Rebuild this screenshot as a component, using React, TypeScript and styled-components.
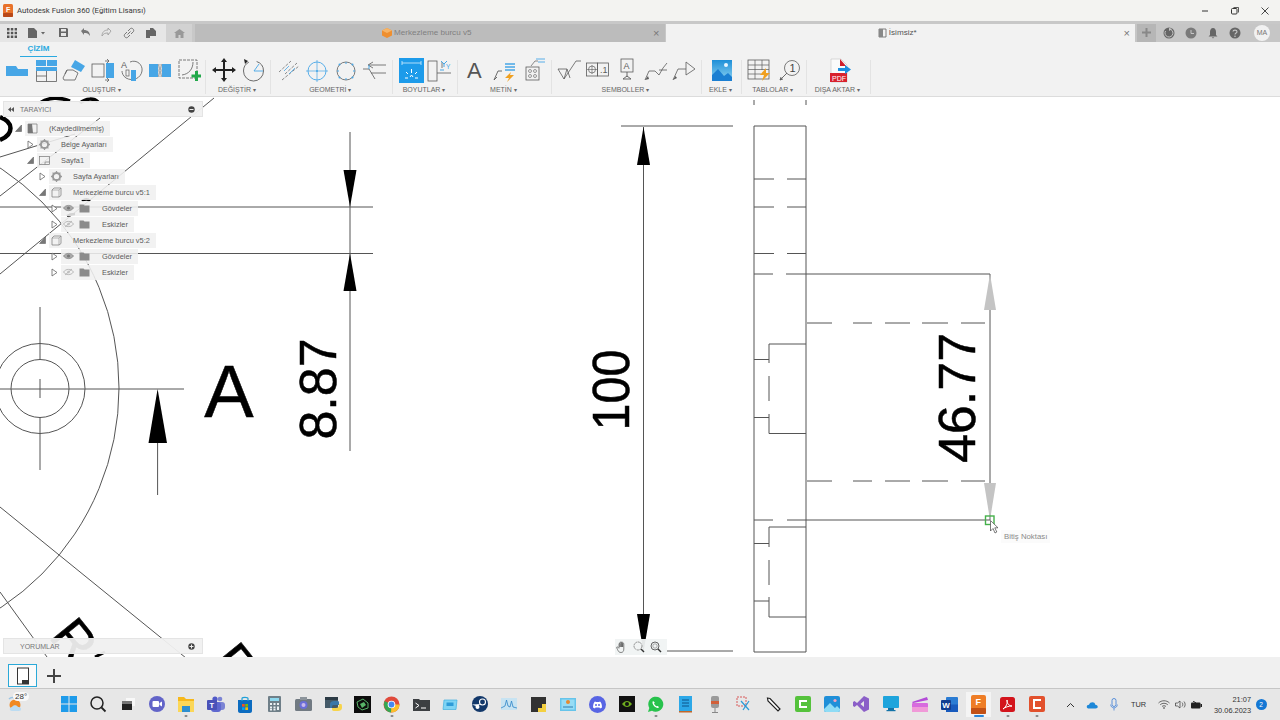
import React from "react";
import styled, { createGlobalStyle } from "styled-components";

const Global = createGlobalStyle`
  html, body { margin: 0; padding: 0; background: #fff; }
  body { font-family: "Liberation Sans", Arial, sans-serif; overflow: hidden; }
  * { box-sizing: border-box; }
`;

const Page = styled.div`
  width: 1280px; height: 720px; display: flex; flex-direction: column; overflow: hidden; background: #fff;
`;

/* ---------- title bar ---------- */
const TitleBar = styled.div`
  height: 21px; flex: none; display: flex; align-items: center; background: #f3f3f1; padding-left: 2px;
`;
const TitleText = styled.span`
  font-family: Roboto, "Liberation Sans", sans-serif; font-size: 7.8px; color: #3a3a3a; margin-left: 3px;
`;
const WindowButtons = styled.div`
  margin-left: auto; display: flex; align-items: center;
`;
const WindowButton = styled.div`
  width: 30px; height: 21px; display: flex; align-items: center; justify-content: center;
`;

/* ---------- tab bar ---------- */
const TabBar = styled.div`
  height: 21px; flex: none; display: flex; background: #c8c8c8; padding-top: 2.5px;
`;
const QuickAccess = styled.div`
  width: 166px; flex: none; display: flex; align-items: center; background: #e6e6e6; padding-left: 6px; gap: 10px;
`;
const HomeTab = styled.div`
  width: 26px; flex: none; margin-right: 3px; background: #d2d2d2; display: flex; align-items: center; justify-content: center;
`;
const Tab = styled.div<{ $active?: boolean }>`
  flex: 1; display: flex; align-items: center; justify-content: center; gap: 2px; position: relative; padding-right: 6px;
  font-size: 8.1px; color: ${p => (p.$active ? "#555" : "#808080")};
  background: ${p => (p.$active ? "#f2f2f2" : "#bcbcbc")};
  margin-right: ${p => (p.$active ? "0" : "1px")};
`;
const TabClose = styled.span`
  position: absolute; right: 5px; top: 3px; font-size: 11px; line-height: 13px; color: #777;
`;
const TabTools = styled.div`
  width: 145px; flex: none; display: flex; align-items: center; background: #c6c6c6; padding-left: 2px;
`;
const PlusBox = styled.div`
  width: 19px; height: 18px; background: #b6b6b6; display: flex; align-items: center; justify-content: center; margin-right: 2px;
`;
const ToolSlot = styled.div`
  width: 22px; display: flex; justify-content: center;
`;
const Avatar = styled.div`
  width: 16px; height: 16px; border-radius: 50%; background: #f1f1f1; color: #777; font-size: 7px;
  display: flex; align-items: center; justify-content: center; margin-left: 8px;
`;

/* ---------- ribbon ---------- */
const Ribbon = styled.div`
  height: 55px; flex: none; background: #f2f2f2; border-bottom: 1px solid #dcdcdc; display: flex; flex-direction: column;
`;
const RibbonTabs = styled.div`
  height: 15px; flex: none; padding-left: 20px;
`;
const RibbonTab = styled.div`
  width: 37px; height: 15px; text-align: center; color: #2aa9e0; font-size: 8px; font-weight: bold; line-height: 14px;
  border-bottom: 1.5px solid #2aa9e0;
`;
const Groups = styled.div`
  display: flex; flex: 1;
`;
const Group = styled.div<{ $w: number }>`
  width: ${p => p.$w}px; flex: none; display: flex; flex-direction: column; align-items: center;
  position: relative;
  &::after { content: ""; position: absolute; right: 0; top: 3px; bottom: 2px; width: 1px; background: #e3e3e3; }
`;
const IconRow = styled.div<{ $gap?: number }>`
  height: 25px; display: flex; align-items: flex-start; gap: ${p => p.$gap ?? 4.7}px; padding-top: 1px;
`;
const GroupLabel = styled.div`
  margin-top: 3px; padding-right: 3px; font-size: 7px; color: #666; line-height: 9px; white-space: nowrap;
  &::after { content: " ▾"; font-size: 6px; }
`;

/* ---------- canvas ---------- */
const Canvas = styled.div`
  flex: 1; position: relative; background: #fff; overflow: hidden;
`;
const Drawing = styled.svg`
  display: block; width: 1280px; height: 560px;
`;
const DimText = styled.text`
  font-family: "Liberation Sans", Arial, sans-serif; font-size: 53px; fill: #000; stroke: #000; stroke-width: 0.5px;
`;
const PanelBar = styled.div`
  width: 200px; height: 16px; background: rgba(240, 240, 240, 0.94); border: 1px solid #e4e4e4;
  display: flex; align-items: center; padding: 0 7px 0 4px; font-size: 7px; color: #777; position: relative;
`;
const BrowserPanel = styled.div`
  position: absolute; left: 3px; top: 4px; width: 200px;
`;
const CommentsPanel = styled.div`
  position: absolute; left: 3px; top: 541px;
`;
const PanelTitle = styled.span<{ $pad: number }>`
  padding-left: ${p => p.$pad}px; flex: 1;
`;
const Tree = styled.div`
  padding-top: 3px; display: flex; flex-direction: column;
`;
const TreeRow = styled.div<{ $level: number }>`
  height: 16px; display: flex; align-items: center; padding-left: ${p => p.$level * 12 + 12}px;
`;
const TreeToggle = styled.div`
  width: 10px; height: 16px; flex: none; display: flex; align-items: center; justify-content: flex-start;
`;
const TreePill = styled.div`
  height: 15px; background: rgba(240, 240, 240, 0.88); display: flex; align-items: center; padding: 0 6px 0 2px;
  font-size: 7.4px; color: #5a5a5a; white-space: nowrap;
`;
const TreeLabel = styled.span<{ $ml: number }>`
  margin-left: ${p => p.$ml}px;
`;
const EyeGap = styled.span`
  width: 5px; flex: none;
`;
const NavTools = styled.div`
  position: absolute; left: 615px; top: 542px; width: 52px; height: 16px; background: rgba(240, 243, 243, 0.95);
  display: flex; align-items: center; gap: 5.5px; padding-left: 1px;
`;
const Tooltip = styled.div`
  position: absolute; left: 1001px; top: 433px; height: 13px; padding: 0 3px; background: #fbfbfb;
  font-size: 7.8px; line-height: 13px; color: #8a8a8a; white-space: nowrap;
`;

/* ---------- sheet bar ---------- */
const SheetBar = styled.div`
  height: 31px; flex: none; background: #f0f0f0; display: flex; align-items: flex-end; padding: 0 0 1px 8px;
`;
const SheetThumb = styled.div`
  width: 29px; height: 23px; border: 1.5px solid #2aa9d8; background: #fafafa; display: flex; align-items: center; justify-content: center;
`;
const AddSheet = styled.div`
  margin-left: 9px; height: 23px; display: flex; align-items: center;
`;

/* ---------- taskbar ---------- */
const Taskbar = styled.div`
  height: 32px; flex: none; background: #e7e7e7; border-top: 1px solid #c6c6c6; display: flex; align-items: center;
`;
const Weather = styled.div`
  width: 54.3px; flex: none; padding-left: 7px; position: relative; display: flex; align-items: center;
`;
const WeatherTemp = styled.span`
  position: absolute; left: 13px; top: -4px; background: #f8f8f8; border-radius: 7px; padding: 0 2px;
  font-size: 8px; line-height: 9px; color: #333;
`;
const TaskApps = styled.div`
  display: flex; align-items: center;
`;
const TaskApp = styled.div<{ $open?: boolean; $active?: boolean }>`
  width: 29.35px; height: 30px; display: flex; align-items: center; justify-content: center; position: relative;
  padding: 2px 2px 3px;
  background: ${p => (p.$active ? "#f4f4f4" : "transparent")};
  background-clip: content-box;
  &::after {
    content: ""; display: ${p => (p.$open || p.$active ? "block" : "none")}; position: absolute; bottom: 3px; left: 50%;
    transform: translateX(-50%); height: 2px; border-radius: 1px;
    width: ${p => (p.$active ? "10px" : "3px")}; background: ${p => (p.$active ? "#2a86d8" : "#8a8a8a")};
  }
`;
const Tray = styled.div`
  margin-left: auto; display: flex; align-items: center; padding-right: 13.5px; font-size: 7.4px; color: #333;
`;
const TraySlot = styled.div<{ $w: number }>`
  width: ${p => p.$w}px; display: flex; justify-content: center; flex: none;
`;
const Clock = styled.div`
  width: 45px; text-align: right; line-height: 11px; font-size: 7.4px; color: #333;
`;
const Badge = styled.div`
  width: 11px; height: 11px; border-radius: 50%; background: #1477d4; color: #fff; font-size: 6.5px;
  display: flex; align-items: center; justify-content: center; margin-left: 4.5px;
`;

/* ---------- icons ---------- */
const B = "#47a6e6";
const G = "#5c5c5c";
const IcSvg = styled.svg`
  display: block; flex: none;
`;
type SP = { children: React.ReactNode; w?: number; h?: number };
const Ic = ({ children, w = 24, h = 24 }: SP) => (
  <IcSvg width={w} height={h} viewBox={`0 0 ${w} ${h}`} fill="none">{children}</IcSvg>
);

const R1 = () => <Ic><path d="M1 8H11L13 11H23V18H1Z" fill={B} /></Ic>;
const R2 = () => <Ic><rect x="2" y="2" width="10" height="6" fill={B} /><rect x="13" y="2" width="10" height="6" fill={B} /><rect x="2" y="9" width="21" height="4" fill={B} /><path d="M2.5 13V23.5H22.5V13M2.5 18H12.5V23.5M12.5 18V13" stroke={G} strokeWidth=".8" /></Ic>;
const R3 = () => <Ic><path d="M9 9L13 2L23 8L19 14Z" fill={B} /><path d="M1 20L5 12L11 12L16 15L13 22H2ZM5 12L3 16" stroke={G} strokeWidth=".8" /></Ic>;
const R4 = () => <Ic><rect x="1" y="6" width="12" height="13" stroke={G} strokeWidth=".8" /><rect x="15" y="5" width="8" height="15" fill={B} /><path d="M14 3H18M18 3L16 1M18 3L16 5M14 22H18M18 22L16 20M18 22L16 24" stroke={G} strokeWidth=".8" /></Ic>;
const R5 = () => <Ic><text x="1" y="10" fontSize="9" fill={G} fontFamily="Liberation Sans">A</text><path d="M10 4C17 1 23 7 22 13C21 20 13 24 6 20C3 18 2 15 2 13" stroke={G} strokeWidth=".8" /><rect x="6" y="12" width="3" height="6" stroke={G} strokeWidth=".7" /><rect x="11" y="12" width="5" height="11" fill={B} /></Ic>;
const R6 = () => <Ic><rect x="1" y="6" width="9" height="13" fill={B} /><rect x="14" y="6" width="9" height="13" fill={B} /><path d="M11 6C10 7 12 10 11 12.5C12 15 10 18 11 19M13 6C14 7 12 10 13 12.5C12 15 14 18 13 19" stroke={G} strokeWidth=".7" /></Ic>;
const R7 = () => <Ic><rect x="2" y="2" width="18" height="18" stroke={G} strokeWidth=".8" strokeDasharray="3 1" /><path d="M5 17C12 16 16 11 16 4" stroke={G} strokeWidth=".8" /><path d="M18 13H21V16.5H24V19.5H21V23H18V19.5H14.5V16.5H18Z" fill="#22a84a" /></Ic>;
const M1 = () => <Ic><path d="M11 2H13V11H22V13H13V22H11V13H2V11H11Z" fill="#222" /><path d="M12 0L15 4H9ZM12 24L15 20H9ZM0 12L4 9V15ZM24 12L20 9V15Z" fill="#222" /></Ic>;
const M2 = () => <Ic><circle cx="12.5" cy="13" r="10" stroke={G} strokeWidth=".9" strokeDasharray="42 8" /><path d="M13 13H22M13 13L18 6" stroke={B} strokeWidth=".9" /><path d="M3 1L7 3L4 6Z" fill="#222" /></Ic>;
const G1 = () => <Ic><path d="M2 14L14 3M8 16L20 5M5 22L22 8" stroke={G} strokeWidth=".7" strokeDasharray="3 1.5" /><path d="M7 13L12 8M12 16L18 10" stroke={B} strokeWidth=".8" /></Ic>;
const G2 = () => <Ic><circle cx="12" cy="13" r="9" stroke={B} strokeWidth=".9" /><path d="M12 2V24M1 13H23" stroke={B} strokeWidth=".7" /><circle cx="12" cy="13" r="1" fill={B} /></Ic>;
const G3 = () => <Ic><circle cx="12" cy="13" r="9" stroke={G} strokeWidth=".8" /><path d="M3 13H5M19 13H21M12 4V6M12 20V22" stroke={B} strokeWidth="1" /><circle cx="5.5" cy="6.5" r="1" fill={B} /><circle cx="18.5" cy="6.5" r="1" fill={B} /><circle cx="5.5" cy="19.5" r="1" fill={B} /><circle cx="18.5" cy="19.5" r="1" fill={B} /></Ic>;
const G4 = () => <Ic><path d="M6 7H23M8 15H23M10 4L5 7L10 10M0 11H6L12 21" stroke={G} strokeWidth=".8" /><path d="M6 11V7" stroke={B} /></Ic>;
const D1 = () => <Ic w={25} h={25}><rect width="25" height="25" fill="#1d9bea" /><path d="M3 5H22M3 3V7M22 3V7" stroke="#d6f0ff" strokeWidth=".8" /><path d="M12.5 11V15M7 14L9 16M18 14L16 16M6 20H9M16 20H19M11 19L12.5 17L14 19" stroke="#fff" strokeWidth="1" /></Ic>;
const D2 = () => <Ic><rect x="1" y="3" width="9" height="20" stroke={G} strokeWidth=".8" /><path d="M10 15H24M15 4V10" stroke={G} strokeWidth=".8" /><path d="M14 3L17 6L20 3M17 6V9" stroke={B} strokeWidth="1" /><path d="M13 12H17" stroke={B} /><text x="19" y="11" fontSize="6.5" fill={B} fontFamily="Liberation Sans">Y</text></Ic>;
const T1 = () => <Ic w={22} h={24}><text x="3" y="20" fontSize="22" fill="#555" fontFamily="Liberation Sans">A</text></Ic>;
const T2 = () => <Ic><path d="M2 22L6 13H10M2 22L5 19" stroke={G} strokeWidth=".9" /><path d="M13 6H23M13 9H23M13 12H23" stroke={B} strokeWidth="1.3" /><path d="M19 14L13 20H17L15 24L22 17H18Z" fill="#f0a020" /></Ic>;
const T3 = () => <Ic><rect x="5" y="9" width="13" height="13" stroke={G} strokeWidth=".8" /><circle cx="9" cy="13" r="1.5" stroke={G} strokeWidth=".6" /><circle cx="14" cy="13" r="1.5" stroke={G} strokeWidth=".6" /><circle cx="9" cy="18" r="1.5" stroke={G} strokeWidth=".6" /><circle cx="14" cy="18" r="1.5" stroke={G} strokeWidth=".6" /><path d="M10 8L14 3H17" stroke={G} strokeWidth=".7" /><path d="M15 1H24M17 4H24" stroke={B} strokeWidth=".9" /></Ic>;
const S1 = () => <Ic><path d="M1 11L7 21L10 11H1M10 11L13 20" stroke={G} strokeWidth=".8" /><path d="M7 21L19 3H24" stroke={G} strokeWidth=".8" /></Ic>;
const S2 = () => <Ic><rect x="0.5" y="5" width="11" height="13" stroke={G} strokeWidth=".8" /><rect x="11.5" y="5" width="11" height="13" stroke={G} strokeWidth=".8" /><circle cx="6" cy="11.5" r="3.5" stroke={G} strokeWidth=".7" /><path d="M1 11.5H11M6 7V16" stroke={G} strokeWidth=".6" /><text x="14" y="15" fontSize="9" fill={G} fontFamily="Liberation Sans">.1</text></Ic>;
const S3 = () => <Ic><rect x="6" y="1" width="12" height="13" stroke={G} strokeWidth=".8" /><text x="8.5" y="11" fontSize="9" fill={G} fontFamily="Liberation Sans">A</text><path d="M12 14V19M8 21H16L12 18Z" stroke={G} strokeWidth=".9" /></Ic>;
const S4 = () => <Ic><path d="M1 22L5 13H11L15 17L19 10L23 5M15 12L23 12" stroke={G} strokeWidth=".8" /><path d="M1 22L4 18L5 21Z" fill={G} /></Ic>;
const S5 = () => <Ic><path d="M1 22L6 11H14M14 4V17L23 11Z" stroke={G} strokeWidth=".8" /><path d="M1 22L3.5 18L5 20Z" fill={G} /></Ic>;
const E1 = () => <Ic><defs><linearGradient id="sky" x1="0" y1="0" x2="0" y2="1"><stop offset="0" stopColor="#1e8fd8" /><stop offset="1" stopColor="#8fd4f2" /></linearGradient></defs><rect x="2" y="2" width="20" height="21" fill="url(#sky)" /><circle cx="16" cy="7" r="2" fill="#eaf6ff" /><path d="M2 23V17L8 11L14 18L18 15L22 19V23Z" fill="#1b7fd2" /></Ic>;
const Tb1 = () => <Ic><rect x="1" y="2" width="21" height="19" stroke={G} strokeWidth=".8" /><path d="M1 7H22M1 11.5H22M1 16H14M8 2V21M15 2V12" stroke={G} strokeWidth=".7" /><path d="M19 10L13 17H17L15 23L23 15H19Z" fill="#f0a020" /></Ic>;
const Tb2 = () => <Ic><circle cx="14" cy="10" r="7.5" stroke={G} strokeWidth=".8" /><text x="11.5" y="14" fontSize="11" fill="#444" fontFamily="Liberation Sans">1</text><path d="M9 15L2 22M2 22L3 19M2 22L5 21" stroke={G} strokeWidth=".9" /></Ic>;
const Pdf = () => <Ic w={24} h={25}><path d="M4 1H14L20 7V24H4Z" fill="#fafafa" stroke="#bbb" strokeWidth=".5" /><path d="M13 1L19 8H13Z" fill="#cf1f2c" /><rect x="3" y="15" width="17" height="9" fill="#d8222e" /><text x="5" y="22.5" fontSize="7" fill="#fff" fontFamily="Liberation Sans">PDF</text><path d="M11 10H18V7L24 11.5L18 16V13H11Z" fill="#1c8fe0" /></Ic>;

const Logo = () => <Ic w={12} h={13}><rect x="1" y="0" width="10" height="13" rx="1.5" fill="#e8722a" /><rect x="1" y="9" width="10" height="4" rx="1" fill="#b84818" /><text x="4" y="7.5" fontSize="7" fontWeight="bold" fill="#fff" fontFamily="Liberation Sans">F</text></Ic>;

const Grid9 = () => <Ic w={12} h={12}><path d="M1 1H3.5V3.5H1ZM4.8 1H7.3V3.5H4.8ZM8.6 1H11V3.5H8.6ZM1 4.8H3.5V7.3H1ZM4.8 4.8H7.3V7.3H4.8ZM8.6 4.8H11V7.3H8.6ZM1 8.6H3.5V11H1ZM4.8 8.6H7.3V11H4.8ZM8.6 8.6H11V11H8.6Z" fill="#555" /></Ic>;
const FileIc = () => <Ic w={20} h={12}><path d="M0 1H6L9 4V11H0Z" fill="#666" /><path d="M13 5H17L15 7.5Z" fill="#666" /></Ic>;
const SaveIc = () => <Ic w={11} h={11}><path d="M1 1H9L10 2V10H1Z" fill="#666" /><rect x="3" y="2" width="5" height="2.5" fill="#e6e6e6" /><rect x="3" y="6" width="5" height="3" fill="#e6e6e6" /></Ic>;
const UndoIc = ({ c }: { c: string }) => <Ic w={12} h={11}><path d="M2 4L5 1V3C8.5 3 11 5 11 9C9.5 6.5 8 6 5 6V8Z" fill={c} /></Ic>;
const RedoIc = () => <Ic w={12} h={11}><path d="M10 4L7 1V3C3.5 3 1 5 1 9C2.5 6.5 4 6 7 6V8Z" stroke="#999" strokeWidth=".8" /></Ic>;
const LinkIc = () => <Ic w={12} h={12}><path d="M5 4L7.5 1.5C9 .5 11.5 2.5 10.5 4.5L8 7M7 8L4.5 10.5C3 11.5 .5 9.5 1.5 7.5L4 5" stroke="#777" strokeWidth="1" /><path d="M4.5 7.5L7.5 4.5" stroke="#777" /></Ic>;
const DocsIc = () => <Ic w={12} h={12}><path d="M1 3H5V11H1ZM5 1H8L11 4V9H5Z" fill="#666" /></Ic>;
const HomeIc = () => <Ic w={11} h={10}><path d="M5.5 1L11 5H9.5V10H6.5V7H4.5V10H1.5V5H0Z" fill="#999" /></Ic>;
const CubeIc = () => <Ic w={10} h={10}><path d="M5 0L10 2.5V7.5L5 10L0 7.5V2.5Z" fill="#ef8f2f" /><path d="M0 2.5L5 5L10 2.5L5 0Z" fill="#f7b466" /></Ic>;
const SheetTabIc = () => <Ic w={9} h={10}><path d="M1 1H8V9H1Z" stroke="#666" strokeWidth=".8" /><path d="M1 1H5V9H1Z" fill="#888" /></Ic>;
const PlusGrey = () => <Ic w={11} h={11}><path d="M4.5 1H6.5V4.5H10V6.5H6.5V10H4.5V6.5H1V4.5H4.5Z" fill="#888" /></Ic>;
const SyncIc = () => <Ic w={12} h={12}><circle cx="6" cy="6" r="5.5" fill="#666" /><path d="M6 2A4 4 0 1 1 2.5 4" stroke="#c6c6c6" strokeWidth="1" /><path d="M6 1V4L9 2Z" fill="#c6c6c6" /></Ic>;
const ClockIc = () => <Ic w={12} h={12}><circle cx="6" cy="6" r="5.5" fill="#7a7a7a" /><path d="M6 3V6.5H9" stroke="#c6c6c6" strokeWidth="1" /></Ic>;
const BellIc = () => <Ic w={12} h={12}><path d="M6 1C8 1 9 3 9 5V8L10.5 9.5H1.5L3 8V5C3 3 4 1 6 1ZM4.8 10.2H7.2L6 11.5Z" fill="#666" /></Ic>;
const HelpIc = () => <Ic w={12} h={12}><circle cx="6" cy="6" r="5.5" fill="#666" /><path d="M4 4.5C4.2 2.6 8 2.6 8 4.7C8 6 6 6 6 7.5" stroke="#c6c6c6" strokeWidth="1.1" /><circle cx="6" cy="9.2" r=".8" fill="#c6c6c6" /></Ic>;

const WinMin = () => <Ic w={10} h={10}><path d="M2 5H8" stroke="#333" strokeWidth="1" /></Ic>;
const WinMax = () => <Ic w={10} h={10}><rect x="1.5" y="2.5" width="5.5" height="5.5" rx="1" stroke="#333" strokeWidth="1" /><path d="M3.5 1.5H8.5V6.5" stroke="#333" strokeWidth=".8" /></Ic>;
const WinX = () => <Ic w={10} h={10}><path d="M1.5 1.5L8.5 8.5M8.5 1.5L1.5 8.5" stroke="#333" strokeWidth=".9" /></Ic>;

const DotMinus = () => <Ic w={7} h={7}><circle cx="3.5" cy="3.5" r="3.2" fill="#444" /><path d="M1.5 3.5H5.5" stroke="#eee" strokeWidth="1" /></Ic>;
const DotPlus = () => <Ic w={7} h={7}><circle cx="3.5" cy="3.5" r="3.2" fill="#444" /><path d="M1.5 3.5H5.5M3.5 1.5V5.5" stroke="#eee" strokeWidth="1" /></Ic>;
const Collapse = () => <Ic w={6} h={5}><path d="M3 0V5L0 2.5ZM6 0V5L3 2.5Z" fill="#555" /></Ic>;

const TriOpen = () => <Ic w={7} h={8}><path d="M6.5 1V7.5H0.5Z" fill="#777" stroke="#555" strokeWidth=".5" /></Ic>;
const TriClosed = () => <Ic w={7} h={9}><path d="M1 1L6 4.5L1 8Z" fill="#fff" stroke="#666" strokeWidth=".8" /></Ic>;
const DocIc = () => <Ic w={11} h={11}><path d="M1 1H10V10H1Z" stroke="#777" strokeWidth=".7" /><path d="M1 1H5L6 10H1Z" fill="#777" /></Ic>;
const GearIc = () => <Ic w={11} h={11}><circle cx="5.5" cy="5.5" r="3.6" stroke="#9a9a9a" strokeWidth="2" /><path d="M5.5 0V2M5.5 9V11M0 5.5H2M9 5.5H11M1.6 1.6L3 3M8 8L9.4 9.4M9.4 1.6L8 3M3 8L1.6 9.4" stroke="#9a9a9a" strokeWidth="1.3" /></Ic>;
const PageIc = () => <Ic w={11} h={9}><rect x=".5" y=".5" width="10" height="8" stroke="#777" strokeWidth=".7" /><path d="M6 8.5V6H10.5" stroke="#777" strokeWidth=".7" /></Ic>;
const BodyIc = () => <Ic w={11} h={11}><path d="M3 1H10V8.5L8 10H1V3Z" stroke="#777" strokeWidth=".7" /><path d="M1 3H8V10M8 3L10 1" stroke="#777" strokeWidth=".5" /></Ic>;
const EyeIc = ({ off }: { off?: boolean }) => <Ic w={11} h={8}><path d="M.5 4C3 .5 8 .5 10.5 4C8 7.5 3 7.5 .5 4Z" stroke={off ? "#aaa" : "#888"} strokeWidth=".8" fill={off ? "none" : "#aaa"} /><circle cx="5.5" cy="4" r="1.6" fill={off ? "#ccc" : "#777"} />{off && <path d="M2 7L9 1" stroke="#aaa" strokeWidth=".7" />}</Ic>;
const FolderIc = () => <Ic w={11} h={9}><path d="M.5 .5H4.5L5.5 1.5H10.5V8.5H.5Z" fill="#8b8b8b" /></Ic>;

const Hand = () => <Ic w={11} h={12}><path d="M3 7V3C3 2 4 2 4 3V6M4 6V1.8C4 .8 5.3 .8 5.3 1.8V6M5.3 6V1.5C5.3 .6 6.6 .6 6.6 1.5V6M6.6 6V2.8C6.6 2 7.8 2 7.8 2.8V8C7.8 10 7 11.5 5 11.5C3 11.5 2.5 10.5 1.5 8.5L.7 6.8C.3 6 1.3 5.5 1.8 6.2L3 7.5" stroke="#555" strokeWidth=".7" /></Ic>;
const Zoom1 = () => <Ic w={12} h={12}><circle cx="5" cy="5" r="4" stroke="#666" strokeWidth=".7" strokeDasharray="2 .6" /><path d="M8 8L11 11" stroke="#333" strokeWidth="1.4" /></Ic>;
const Zoom2 = () => <Ic w={12} h={12}><circle cx="5" cy="5" r="4" stroke="#555" strokeWidth=".9" /><circle cx="5" cy="5" r="2.2" stroke="#777" strokeWidth=".6" /><path d="M8 8L11 11" stroke="#333" strokeWidth="1.4" /></Ic>;

/* taskbar app icons */
const A = {
  start: <Ic w={18} h={18}><path d="M1 1H8.5V8.5H1ZM9.5 1H17V8.5H9.5ZM1 9.5H8.5V17H1ZM9.5 9.5H17V17H9.5Z" fill="#1e9bea" /></Ic>,
  search: <Ic w={18} h={18}><circle cx="8" cy="8" r="6" stroke="#222" strokeWidth="1.5" /><path d="M12.5 12.5L16.5 16.5" stroke="#222" strokeWidth="1.8" /></Ic>,
  task: <Ic w={14} h={14}><rect x="5" y="1" width="9" height="8" fill="#f8f8f8" /><rect x="1" y="4" width="10" height="9" fill="#222" /><rect x="1" y="4" width="10" height="3" fill="#777" /></Ic>,
  meet: <Ic w={18} h={18}><circle cx="9" cy="9" r="8" fill="#6264c8" /><rect x="4.5" y="6" width="6.5" height="6" rx="1" fill="#fff" /><path d="M11.5 8L14 6.5V11.5L11.5 10Z" fill="#fff" /></Ic>,
  files: <Ic w={18} h={17}><path d="M1 1H7L9 3H17V15H1Z" fill="#f6b81c" /><rect x="1" y="5" width="16" height="11" fill="#fbd758" /><rect x="5" y="10" width="8" height="6" fill="#2d8fd0" /></Ic>,
  teams: <Ic w={18} h={16}><circle cx="13" cy="3" r="2.3" fill="#7b83d4" /><circle cx="8" cy="3" r="2.6" fill="#5059c9" /><rect x="10" y="6" width="8" height="8" rx="3" fill="#7b83d4" /><rect x="4" y="6" width="10" height="10" rx="3" fill="#5f68cf" /><rect x="0" y="4" width="10" height="10" rx="1" fill="#4a52b8" /><text x="2.5" y="12" fontSize="7.5" fontWeight="bold" fill="#fff" fontFamily="Liberation Sans">T</text></Ic>,
  store: <Ic w={16} h={17}><path d="M1 4H15V15C15 16 14 17 13 17H3C2 17 1 16 1 15Z" fill="#0c6cc0" /><path d="M5 5V2.5C5 1 11 1 11 2.5V5" stroke="#1fa0d8" strokeWidth="1.2" /><path d="M5 8H7.7V10.7H5Z" fill="#f25022" /><path d="M8.3 8H11V10.7H8.3Z" fill="#7fba00" /><path d="M5 11.3H7.7V14H5Z" fill="#00a4ef" /><path d="M8.3 11.3H11V14H8.3Z" fill="#ffb900" /></Ic>,
  calc: <Ic w={13} h={16}><rect width="13" height="16" rx="1" fill="#6f7f88" /><rect x="2" y="2" width="9" height="3" fill="#8ed8ee" /><path d="M2 7H4V9H2ZM5.5 7H7.5V9H5.5ZM9 7H11V9H9ZM2 10.5H4V12.5H2ZM5.5 10.5H7.5V12.5H5.5ZM9 10.5H11V14H9ZM2 13H4V14.5H2ZM5.5 13H7.5V14.5H5.5Z" fill="#eef2f4" /></Ic>,
  camera: <Ic w={17} h={14}><rect y="2" width="17" height="12" rx="1.5" fill="#717a82" /><rect x="5" y="0" width="7" height="3" fill="#8c949b" /><circle cx="8.5" cy="8" r="4" fill="#6a6ed8" /><circle cx="8.5" cy="8" r="2" fill="#c7b8ec" /></Ic>,
  python: <Ic w={17} h={17}><rect y="1" width="13" height="11" fill="#445a68" /><rect y="1" width="13" height="3" fill="#2b3a44" /><path d="M9 5H13C14 5 14 6 14 7V9H9C7 9 7 10 7 12H5V8C5 6 7 5 9 5Z" fill="#3a77a8" /><path d="M14 8H16C17 8 17 10 17 12C17 14 15 15 13 15H9C7 15 7 14 7 12H11C13 12 14 11 14 8Z" fill="#f7d44b" /></Ic>,
  malware: <Ic w={17} h={17}><rect width="17" height="17" fill="#0c0c0c" /><path d="M3 6L9 3L14 7V12L8 14L4 11Z" stroke="#58b368" strokeWidth="1" /><path d="M6 8L10 6L12 9L8 12Z" fill="#58b368" /></Ic>,
  chrome: <Ic w={17} h={17}><circle cx="8.5" cy="8.5" r="8" fill="#e04a3c" /><path d="M8.5 8.5L1.5 5L1 8C1 13 4 16 8 16.5Z" fill="#35a853" /><path d="M8.5 8.5H16.5C16.5 13 13 16.5 8 16.5Z" fill="#fbc02d" /><circle cx="8.5" cy="8.5" r="3.8" fill="#fff" /><circle cx="8.5" cy="8.5" r="2.9" fill="#4688f1" /></Ic>,
  term: <Ic w={17} h={13}><path d="M0 1H6L7 2H17V13H0Z" fill="#3c3f42" /><path d="M2.5 5L6 7.5L2.5 10" stroke="#fff" strokeWidth="1" /><path d="M8 10H13" stroke="#fff" strokeWidth="1" /></Ic>,
  box: <Ic w={16} h={13}><path d="M2 2H15L14 11.5H1Z" fill="#7fd4f4" stroke="#3fb0e0" strokeWidth=".7" /><rect x="4.5" y="4.5" width="7" height="3.5" fill="#2d9bd8" /></Ic>,
  steam: <Ic w={16} h={16}><circle cx="8" cy="8" r="8" fill="#12386a" /><path d="M0 8.5L6 11L8 8" fill="#e8eef5" /><circle cx="10.5" cy="6" r="3" stroke="#fff" strokeWidth="1.1" /><circle cx="5.5" cy="11" r="2" fill="#fff" /></Ic>,
  chart: <Ic w={16} h={12}><rect width="16" height="12" fill="#c7e3f2" /><path d="M0 10L4 8L5.5 2L7 8L9 9L10.5 3L12 9L16 10" stroke="#2d85c8" strokeWidth=".8" /></Ic>,
  sticky: <Ic w={15} h={15}><rect width="15" height="15" fill="#323232" /><path d="M15 7V15H7L7 11H11V7Z" fill="#f4d03f" /></Ic>,
  ctrl: <Ic w={16} h={13}><rect width="16" height="13" fill="#66c4ea" /><rect x="1.5" y="1.5" width="13" height="10" fill="#96dcf5" /><circle cx="8" cy="4" r="2" fill="#e68a2e" /><path d="M3 9H13" stroke="#2d7db0" /></Ic>,
  discord: <Ic w={17} h={17}><circle cx="8.5" cy="8.5" r="8.5" fill="#5865e4" /><path d="M4 11.5C4 8 5 6 6 5.5L7 6H10L11 5.5C12 6 13 8 13 11.5L11 12.5L10.5 11.5H6.5L6 12.5Z" fill="#fff" /><circle cx="7" cy="9" r="1" fill="#5865e4" /><circle cx="10" cy="9" r="1" fill="#5865e4" /></Ic>,
  nvidia: <Ic w={16} h={16}><rect width="16" height="16" fill="#111" /><path d="M3 8C6 4 10 4 13 8C10 12 6 12 3 8Z" fill="#6fae1f" /><circle cx="8" cy="8" r="2" fill="#111" /></Ic>,
  wa: <Ic w={17} h={17}><path d="M1 16L2.3 12A7.5 7.5 0 1 1 5 14.7Z" fill="#27c24c" /><path d="M6 5C5 6 5.5 8 7 10C8.5 11.5 10.5 12.5 12 11.5L11 10L9.5 10.3C8.5 9.8 7.5 8.7 7 7.5L7.8 6.5Z" fill="#fff" /></Ic>,
  note: <Ic w={13} h={17}><rect width="13" height="15" fill="#2ca8e8" /><path d="M3 4H10M3 7H10M3 10H10" stroke="#0a4a80" strokeWidth=".9" /><rect y="15" width="13" height="1.5" fill="#c2672a" /></Ic>,
  mic: <Ic w={10} h={17}><rect x="1" y="0" width="8" height="12" rx="2" fill="#9a9a9a" /><rect x="1" y="5" width="8" height="3" fill="#d2603a" /><path d="M5 12V16M2 16.5H8" stroke="#888" /></Ic>,
  snip: <Ic w={16} h={16}><rect x="1" y="1" width="9" height="9" stroke="#d85a5a" strokeWidth="1" strokeDasharray="2 1" /><path d="M5 5L13 14M13 5L7 14" stroke="#2a9ad8" strokeWidth="1.2" /></Ic>,
  pen: <Ic w={15} h={15}><path d="M1.5 1L4 1.5L14 12L12 14L2 4Z" fill="#fff" stroke="#222" strokeWidth="1.2" /></Ic>,
  green: <Ic w={16} h={16}><rect width="16" height="16" rx="2" fill="#55c23c" /><path d="M12 5H5V11H12" stroke="#fff" strokeWidth="2" /></Ic>,
  photos: <Ic w={16} h={16}><rect width="16" height="16" rx="2" fill="#1f8fd8" /><path d="M0 13L6 7L11 12L13 10L16 13V14C16 15 15 16 14 16H2C1 16 0 15 0 14Z" fill="#8fdcf5" /><circle cx="11" cy="4.5" r="1.6" fill="#f5a0c0" /></Ic>,
  vs: <Ic w={16} h={16}><path d="M11 0L16 2.5V13.5L11 16L4 9L1.5 11L0 10V6L1.5 5L4 7ZM11 5L7.5 8L11 11Z" fill="#8b5fc8" /></Ic>,
  mon: <Ic w={16} h={16}><rect x="0" y="0" width="16" height="12" rx="1" fill="#1ea4dc" /><rect x="5" y="12" width="6" height="2" fill="#1273a8" /><rect x="3.5" y="14" width="9" height="1.2" fill="#1273a8" /></Ic>,
  clap: <Ic w={16} h={16}><path d="M0 6L15 1L16 4L1 7Z" fill="#b34bd8" /><rect y="7" width="16" height="9" rx="1" fill="#d86bde" /><rect y="11" width="16" height="5" fill="#f09ad8" /></Ic>,
  word: <Ic w={17} h={15}><rect x="5" width="12" height="15" rx="1" fill="#2b7cd3" /><rect x="5" y="7.5" width="12" height="7.5" fill="#185abd" /><rect y="3" width="10" height="10" rx="1" fill="#103f91" /><text x="1.3" y="11" fontSize="8" fontWeight="bold" fill="#fff" fontFamily="Liberation Sans">W</text></Ic>,
  fusion: <Ic w={15} h={19}><rect width="15" height="19" rx="2" fill="#ee7d26" /><rect y="13" width="15" height="6" rx="1" fill="#c25115" /><text x="4.5" y="10" fontSize="9" fontWeight="bold" fill="#fff" fontFamily="Liberation Sans">F</text></Ic>,
  acro: <Ic w={15} h={15}><rect width="15" height="15" rx="2.5" fill="#d3141c" /><path d="M3 12C6 10 8 6 7 3C6.5 6 9 9 12 9C9 9 5 10 3 12Z" stroke="#fff" strokeWidth="1" /></Ic>,
  cam: <Ic w={16} h={16}><rect width="16" height="16" rx="2" fill="#e2512d" /><path d="M12 4H5V12H12" stroke="#fff" strokeWidth="2" /></Ic>,
};

const apps: { k: keyof typeof A; open?: boolean; active?: boolean }[] = [
  { k: "start" }, { k: "search" }, { k: "task" }, { k: "meet" }, { k: "files", open: true }, { k: "teams" }, { k: "store" },
  { k: "calc" }, { k: "camera" }, { k: "python" }, { k: "malware" }, { k: "chrome", open: true }, { k: "term" }, { k: "box" },
  { k: "steam" }, { k: "chart" }, { k: "sticky" }, { k: "ctrl" }, { k: "discord" }, { k: "nvidia" }, { k: "wa", open: true },
  { k: "note" }, { k: "mic" }, { k: "snip" }, { k: "pen" }, { k: "green" }, { k: "photos" }, { k: "vs" }, { k: "mon" },
  { k: "clap" }, { k: "word" }, { k: "fusion", active: true }, { k: "acro", open: true }, { k: "cam", open: true },
];

const groups: { w: number; label: string; icons: React.FC[]; gap?: number }[] = [
  { w: 206, label: "OLUŞTUR", icons: [R1, R2, R3, R4, R5, R6, R7] },
  { w: 64.6, label: "DEĞİŞTİR", icons: [M1, M2] },
  { w: 122.1, label: "GEOMETRİ", icons: [G1, G2, G3, G4] },
  { w: 65.3, label: "BOYUTLAR", icons: [D1, D2], gap: 3 },
  { w: 93.7, label: "METİN", icons: [T1, T2, T3], gap: 5.5 },
  { w: 150.3, label: "SEMBOLLER", icons: [S1, S2, S3, S4, S5] },
  { w: 39.7, label: "EKLE", icons: [E1] },
  { w: 65, label: "TABLOLAR", icons: [Tb1, Tb2], gap: 7 },
  { w: 64, label: "DIŞA AKTAR", icons: [Pdf] },
];

const tree: { level: number; open: boolean; eye?: "on" | "off"; icon: React.ReactNode; label: string; ml: number }[] = [
  { level: 0, open: true, icon: <DocIc />, label: "(Kaydedilmemiş)", ml: 11 },
  { level: 1, open: false, icon: <GearIc />, label: "Belge Ayarları", ml: 11 },
  { level: 1, open: true, icon: <PageIc />, label: "Sayfa1", ml: 11 },
  { level: 2, open: false, icon: <GearIc />, label: "Sayfa Ayarları", ml: 11 },
  { level: 2, open: true, icon: <BodyIc />, label: "Merkezleme burcu v5:1", ml: 11 },
  { level: 3, open: false, eye: "on", icon: <FolderIc />, label: "Gövdeler", ml: 12 },
  { level: 3, open: false, eye: "off", icon: <FolderIc />, label: "Eskizler", ml: 12 },
  { level: 2, open: true, icon: <BodyIc />, label: "Merkezleme burcu v5:2", ml: 11 },
  { level: 3, open: false, eye: "on", icon: <FolderIc />, label: "Gövdeler", ml: 12 },
  { level: 3, open: false, eye: "off", icon: <FolderIc />, label: "Eskizler", ml: 12 },
];

const ink = "#555";
const segs: [number, number, number, number][] = [
  /* left view */
  [40, 307, 40, 360], [40, 379, 40, 398], [40, 417, 40, 470], [0, 389, 184, 389], [157.6, 443, 157.6, 495],
  [214, 98, 0, 274], [0, 157, 75, 134], [0, 196, 100, 118], [0, 507, 186, 658], [0, 592, 47, 657],
  /* 8.87 dimension */
  [350, 132, 350, 451], [0, 207, 373, 207], [0, 253.5, 373, 253.5],
  /* 100 dimension */
  [643.5, 127, 643.5, 650], [621, 126, 733, 126], [667, 651, 733, 651],
  /* part outline */
  [754, 126, 806, 126], [754, 126, 754, 652], [806, 126, 806, 652], [754, 652, 806, 652], [754, 100, 754, 105], [806, 100, 806, 105],
  [754, 179, 774, 179], [787, 179, 806, 179], [754, 207, 774, 207], [787, 207, 806, 207], [754, 253.5, 774, 253.5], [787, 253.5, 806, 253.5],
  [754, 274, 773, 274], [786, 274, 990, 274], [754, 520, 773, 520], [787, 520, 990, 520],
  /* upper counterbore */
  [769, 344, 806, 344], [769, 433.5, 806, 433.5], [769, 344, 769, 363], [769, 376, 769, 401], [769, 414, 769, 433.5], [754, 359.5, 769, 359.5], [754, 417.5, 769, 417.5],
  /* lower counterbore */
  [769, 527, 806, 527], [769, 617, 806, 617], [769, 527, 769, 547], [769, 560, 769, 585], [769, 597, 769, 617], [754, 543.5, 769, 543.5], [754, 601, 769, 601],
  /* 46.77 dashes */
  [807, 323, 832, 323], [853, 323, 872, 323], [885, 323, 910, 323], [922, 323, 948, 323], [961, 323, 985, 323],
  [807, 481, 832, 481], [853, 481, 872, 481], [885, 481, 910, 481], [922, 481, 948, 481], [961, 481, 985, 481],
  [990, 274, 990, 520],
];

export default function App() {
  return (
    <Page>
      <Global />
      <TitleBar>
        <Logo />
        <TitleText>Autodesk Fusion 360 (Eğitim Lisansı)</TitleText>
        <WindowButtons>
          <WindowButton><WinMin /></WindowButton>
          <WindowButton><WinMax /></WindowButton>
          <WindowButton><WinX /></WindowButton>
        </WindowButtons>
      </TitleBar>
      <TabBar>
        <QuickAccess>
          <Grid9 /><FileIc /><SaveIc /><UndoIc c="#777" /><RedoIc /><LinkIc /><DocsIc />
        </QuickAccess>
        <HomeTab><HomeIc /></HomeTab>
        <Tab><CubeIc />Merkezleme burcu v5<TabClose>×</TabClose></Tab>
        <Tab $active><SheetTabIc />İsimsiz*<TabClose>×</TabClose></Tab>
        <TabTools>
          <PlusBox><PlusGrey /></PlusBox>
          <ToolSlot><SyncIc /></ToolSlot>
          <ToolSlot><ClockIc /></ToolSlot>
          <ToolSlot><BellIc /></ToolSlot>
          <ToolSlot><HelpIc /></ToolSlot>
          <Avatar>MA</Avatar>
        </TabTools>
      </TabBar>
      <Ribbon>
        <RibbonTabs><RibbonTab>ÇİZİM</RibbonTab></RibbonTabs>
        <Groups>
          {groups.map(g => (
            <Group key={g.label} $w={g.w}>
              <IconRow $gap={g.gap}>{g.icons.map((I, i) => <I key={i} />)}</IconRow>
              <GroupLabel>{g.label}</GroupLabel>
            </Group>
          ))}
        </Groups>
      </Ribbon>
      <Canvas>
        <Drawing viewBox="0 97 1280 560">
          {segs.map(([a, b, c, d], i) => <line key={i} x1={a} y1={b} x2={c} y2={d} stroke={ink} strokeWidth="1" />)}
          <circle cx="-144" cy="388" r="263" fill="none" stroke={ink} strokeWidth="1" />
          <circle cx="40" cy="388.5" r="29" fill="none" stroke={ink} strokeWidth="1" />
          <circle cx="40" cy="388.5" r="45" fill="none" stroke={ink} strokeWidth="1" />
          {/* arrowheads */}
          <path d="M157.6 389L167 443H148.5Z" fill="#000" />
          <path d="M350 207L356.5 170H343.5Z" fill="#000" />
          <path d="M350 253.5L356.5 291H343.5Z" fill="#000" />
          <path d="M643.5 127L650 165H637Z" fill="#000" />
          <path d="M643.5 652L650 614H637Z" fill="#000" />
          <path d="M990 274L996 310H984Z" fill="#c4c4c4" />
          <path d="M990 520L996 483H984Z" fill="#c4c4c4" />
          {/* dimension text */}
          <DimText x="229" y="416.5" textAnchor="middle" style={{ fontSize: 74 }}>A</DimText>
          <DimText textAnchor="middle" transform="translate(335.5 389) rotate(-90)" style={{ fontSize: 52 }}>8.87</DimText>
          <DimText textAnchor="middle" transform="translate(628.5 390) rotate(-90)" textLength={81} lengthAdjust="spacingAndGlyphs" style={{ fontSize: 52 }}>100</DimText>
          <DimText textAnchor="middle" transform="translate(975 398) rotate(-90)" style={{ fontSize: 52 }}>46.77</DimText>
          <DimText transform="translate(48 637) rotate(51)">R</DimText>
          <DimText transform="translate(210 662) rotate(51)">P</DimText>
          {/* letter fragments above the browser panel */}
          <path d="M40 103C48 97 60 97 70 101M80 103C86 98 94 98 98 102" stroke="#000" strokeWidth="3.5" fill="none" />
          <path d="M0 117C14 122 14 134 0 140" stroke="#000" strokeWidth="4.5" fill="none" />
          <path d="M82 201C85 199 88 199 90 201M67 216C70 214 73 214 75 214" stroke="#000" strokeWidth="2.5" fill="none" />
          <path d="M95 657L105 652" stroke="#000" strokeWidth="3" />
          {/* end point snap */}
          <rect x="985.5" y="516" width="8.5" height="8.5" fill="none" stroke="#45b04a" strokeWidth="1.4" />
          <path d="M990.5 520.5V531L993 528.5L995 533L996.8 532L994.8 527.8H998Z" fill="#fff" stroke="#444" strokeWidth=".7" />
        </Drawing>
        <BrowserPanel>
          <PanelBar>
            <Collapse />
            <PanelTitle $pad={6}>TARAYICI</PanelTitle>
            <DotMinus />
          </PanelBar>
          <Tree>
            {tree.map((r, i) => (
              <TreeRow key={i} $level={r.level}>
                <TreeToggle>{r.open ? <TriOpen /> : <TriClosed />}</TreeToggle>
                <TreePill>
                  {r.eye && <EyeIc off={r.eye === "off"} />}
                  {r.eye && <EyeGap />}
                  {r.icon}
                  <TreeLabel $ml={r.ml}>{r.label}</TreeLabel>
                </TreePill>
              </TreeRow>
            ))}
          </Tree>
        </BrowserPanel>
        <CommentsPanel>
          <PanelBar>
            <PanelTitle $pad={12}>YORUMLAR</PanelTitle>
            <DotPlus />
          </PanelBar>
        </CommentsPanel>
        <NavTools><Hand /><Zoom1 /><Zoom2 /></NavTools>
        <Tooltip>Bitiş Noktası</Tooltip>
      </Canvas>
      <SheetBar>
        <SheetThumb>
          <Ic w={14} h={18}><rect x="1.5" y="1" width="11" height="16" stroke="#333" strokeWidth="1" fill="#fff" /><rect x="6" y="13" width="6.5" height="4" fill="#333" /></Ic>
        </SheetThumb>
        <AddSheet>
          <Ic w={16} h={16}><path d="M7 1H9V7H15V9H9V15H7V9H1V7H7Z" fill="#444" /></Ic>
        </AddSheet>
      </SheetBar>
      <Taskbar>
        <Weather>
          <Ic w={17} h={17}><circle cx="8" cy="9" r="5.5" fill="#f08a24" /><path d="M2 3C4 1 7 1 8 3" stroke="#9ac4e4" strokeWidth="1.5" /><path d="M5 15C2 15 2 11 5 11C6 8.5 10 8.5 11 11C15 10.5 15 15 12 15Z" fill="#bcdcf2" /></Ic>
          <WeatherTemp>28°</WeatherTemp>
        </Weather>
        <TaskApps>
          {apps.map(a => <TaskApp key={a.k} $open={a.open} $active={a.active}>{A[a.k]}</TaskApp>)}
        </TaskApps>
        <Tray>
          <TraySlot $w={19}><Ic w={9} h={6}><path d="M1 5L4.5 1.5L8 5" stroke="#333" strokeWidth="1" /></Ic></TraySlot>
          <TraySlot $w={23}><Ic w={12} h={8}><path d="M3 7.5C0 7.5 0 3.8 3 3.8C4 .5 9 .5 9.3 3.8C12.5 4 12.5 7.5 9.5 7.5Z" fill="#1e88d8" /></Ic></TraySlot>
          <TraySlot $w={21}><Ic w={8} h={13}><rect x="2" y=".5" width="4" height="8" rx="2" stroke="#4a86d8" strokeWidth=".9" /><path d="M.7 6.5C.7 11 7.3 11 7.3 6.5M4 10V12.5" stroke="#4a86d8" strokeWidth=".8" /></Ic></TraySlot>
          <TraySlot $w={29}>TUR</TraySlot>
          <TraySlot $w={22}><Ic w={12} h={9}><path d="M.5 3C3.5 0 8.5 0 11.5 3M2.2 4.8C4.2 2.8 7.8 2.8 9.8 4.8M4 6.5C5 5.5 7 5.5 8 6.5" stroke="#333" strokeWidth=".7" /><circle cx="6" cy="8" r=".8" fill="#333" /></Ic></TraySlot>
          <TraySlot $w={11}><Ic w={12} h={9}><path d="M.5 3H2.5L5 1V8L2.5 6H.5Z" stroke="#333" strokeWidth=".7" /><path d="M7 2.5C8 3.5 8 5.5 7 6.5M9 1.5C10.5 3 10.5 6 9 7.5" stroke="#333" strokeWidth=".7" /></Ic></TraySlot>
          <TraySlot $w={20}><Ic w={11} h={8}><rect x="0" y="1.5" width="9.5" height="6" rx="1" fill="#222" /><rect x="9.5" y="3" width="1.5" height="3" fill="#222" /><path d="M2 0L5 2" stroke="#222" /></Ic></TraySlot>
          <Clock>21:07<br />30.06.2023</Clock>
          <Badge>2</Badge>
        </Tray>
      </Taskbar>
    </Page>
  );
}
